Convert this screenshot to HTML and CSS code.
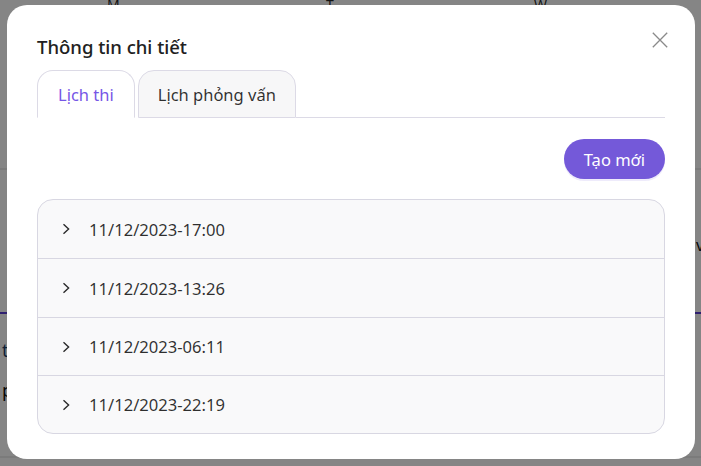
FILE: index.html
```html
<!DOCTYPE html>
<html lang="vi">
<head>
<meta charset="utf-8">
<link rel="stylesheet" href="styles.css">
</head>
<body>
<div class="page">
  <div class="cal-head">
    <span class="day d1">M</span>
    <span class="day d2">T</span>
    <span class="day d3">W</span>
  </div>
  <div class="bg-line l1"></div>
  <div class="bg-text v">v</div>
  <div class="bg-line l2"></div>
  <div class="bg-text t1">t</div>
  <div class="bg-text p1">p</div>
  <div class="bg-line l3"></div>
</div>
<div class="overlay"></div>
<div class="modal">
  <div class="modal-head">
    <div class="title">Thông tin chi tiết</div>
    <button class="close" aria-label="close">
      <svg width="16" height="16" viewBox="0 0 16 16"><path d="M0.8 0.8 L15.2 15.2 M15.2 0.8 L0.8 15.2" stroke="#8a8a8a" stroke-width="1.3" fill="none"/></svg>
    </button>
  </div>
  <div class="tabs">
    <div class="tab active">Lịch thi</div>
    <div class="tab">Lịch phỏng vấn</div>
    <div class="tab-fill"></div>
  </div>
  <div class="actions">
    <button class="btn-primary">Tạo mới</button>
  </div>
  <div class="collapse">
    <div class="item">
      <svg class="chev" width="8" height="12" viewBox="0 0 8 12"><path d="M1.5 1.2 L6.6 6 L1.5 10.8" stroke="#2a2a2a" stroke-width="1.4" fill="none"/></svg>
      <span>11/12/2023-17:00</span>
    </div>
    <div class="item">
      <svg class="chev" width="8" height="12" viewBox="0 0 8 12"><path d="M1.5 1.2 L6.6 6 L1.5 10.8" stroke="#2a2a2a" stroke-width="1.4" fill="none"/></svg>
      <span>11/12/2023-13:26</span>
    </div>
    <div class="item">
      <svg class="chev" width="8" height="12" viewBox="0 0 8 12"><path d="M1.5 1.2 L6.6 6 L1.5 10.8" stroke="#2a2a2a" stroke-width="1.4" fill="none"/></svg>
      <span>11/12/2023-06:11</span>
    </div>
    <div class="item">
      <svg class="chev" width="8" height="12" viewBox="0 0 8 12"><path d="M1.5 1.2 L6.6 6 L1.5 10.8" stroke="#2a2a2a" stroke-width="1.4" fill="none"/></svg>
      <span>11/12/2023-22:19</span>
    </div>
  </div>
</div>
</body>
</html>
```
FILE: styles.css
```css
* { box-sizing: border-box; }
html, body { margin: 0; padding: 0; }
body {
  width: 701px;
  height: 466px;
  overflow: hidden;
  position: relative;
  background: #fff;
  font-family: "Noto Sans", "Open Sans", sans-serif;
  color: rgba(0,0,0,0.85);
}
.page { position: absolute; inset: 0; }
.cal-head { position: absolute; top: -5px; left: 0; width: 100%; height: 20px; font-size: 14px; }
.day { position: absolute; top: 0; }
.d1 { left: 107px; }
.d2 { left: 326px; }
.d3 { left: 534px; }
.bg-line { position: absolute; left: 0; right: 0; height: 2px; background: #ececec; }
.l1 { top: 168px; }
.l2 { top: 312px; height: 2px; background: #5b3fd6; }
.l3 { top: 456px; }
.bg-text { position: absolute; font-size: 18px; color: #111; }
.v { left: 696px; top: 234px; font-size: 16px; }
.t1 { left: 2px; top: 338px; color: #1c3e6a; }
.p1 { left: 2px; top: 378px; }

.overlay { position: absolute; inset: 0; background: rgba(0,0,0,0.48); }

.modal {
  position: absolute;
  left: 7px;
  top: 5px;
  width: 688px;
  height: 454px;
  background: #fff;
  border-radius: 20px;
  padding: 30px 30px 0 30px;
}
.modal-head { display: flex; justify-content: space-between; align-items: flex-start; }
.title { font-size: 18.5px; font-weight: 500; color: rgba(0,0,0,0.88); line-height: 24px; -webkit-text-stroke: 0.2px rgba(0,0,0,0.6); }
.close {
  border: 0; background: none; padding: 0; margin: -3px -3px 0 0;
  width: 16px; height: 16px; display: flex;
}

.tabs { display: flex; align-items: flex-end; margin-top: 11px; height: 48px; }
.tab {
  height: 48px;
  padding: 0 19px;
  display: flex;
  align-items: center;
  font-size: 16.5px;
  color: rgba(0,0,0,0.82);
  background: #f7f7f8;
  border: 1px solid #dcdae6;
  border-radius: 16px 16px 0 0;
  margin-right: 3px;
}
.tab.active {
  background: #fff;
  border-bottom-color: #fff;
  color: #7656e6;
  padding: 0 20px;
}
.tab-fill { flex: 1; height: 1px; border-bottom: 1px solid #dcdae6; align-self: flex-end; margin-left: -3px; }

.actions { display: flex; justify-content: flex-end; margin-top: 21px; }
.btn-primary {
  height: 40px;
  padding: 0 20px;
  border: 0;
  border-radius: 20px;
  background: #7459d9;
  color: #fff;
  font-family: inherit;
  font-size: 16.5px;
  box-shadow: 0 2px 0 rgba(92,60,220,0.1);
}

.collapse {
  margin-top: 20px;
  border: 1px solid #d8d7e2;
  border-radius: 16px;
  background: #f9f9fa;
  overflow: hidden;
}
.item {
  height: 59px;
  display: flex;
  align-items: center;
  padding-left: 24px;
  font-size: 16.6px;
  color: rgba(0,0,0,0.82);
  border-bottom: 1px solid #d8d7e2;
}
.item:nth-child(3) { height: 58px; }
.item:last-child { border-bottom: 0; height: 57px; }
.chev { margin-right: 19px; flex: none; }
```
